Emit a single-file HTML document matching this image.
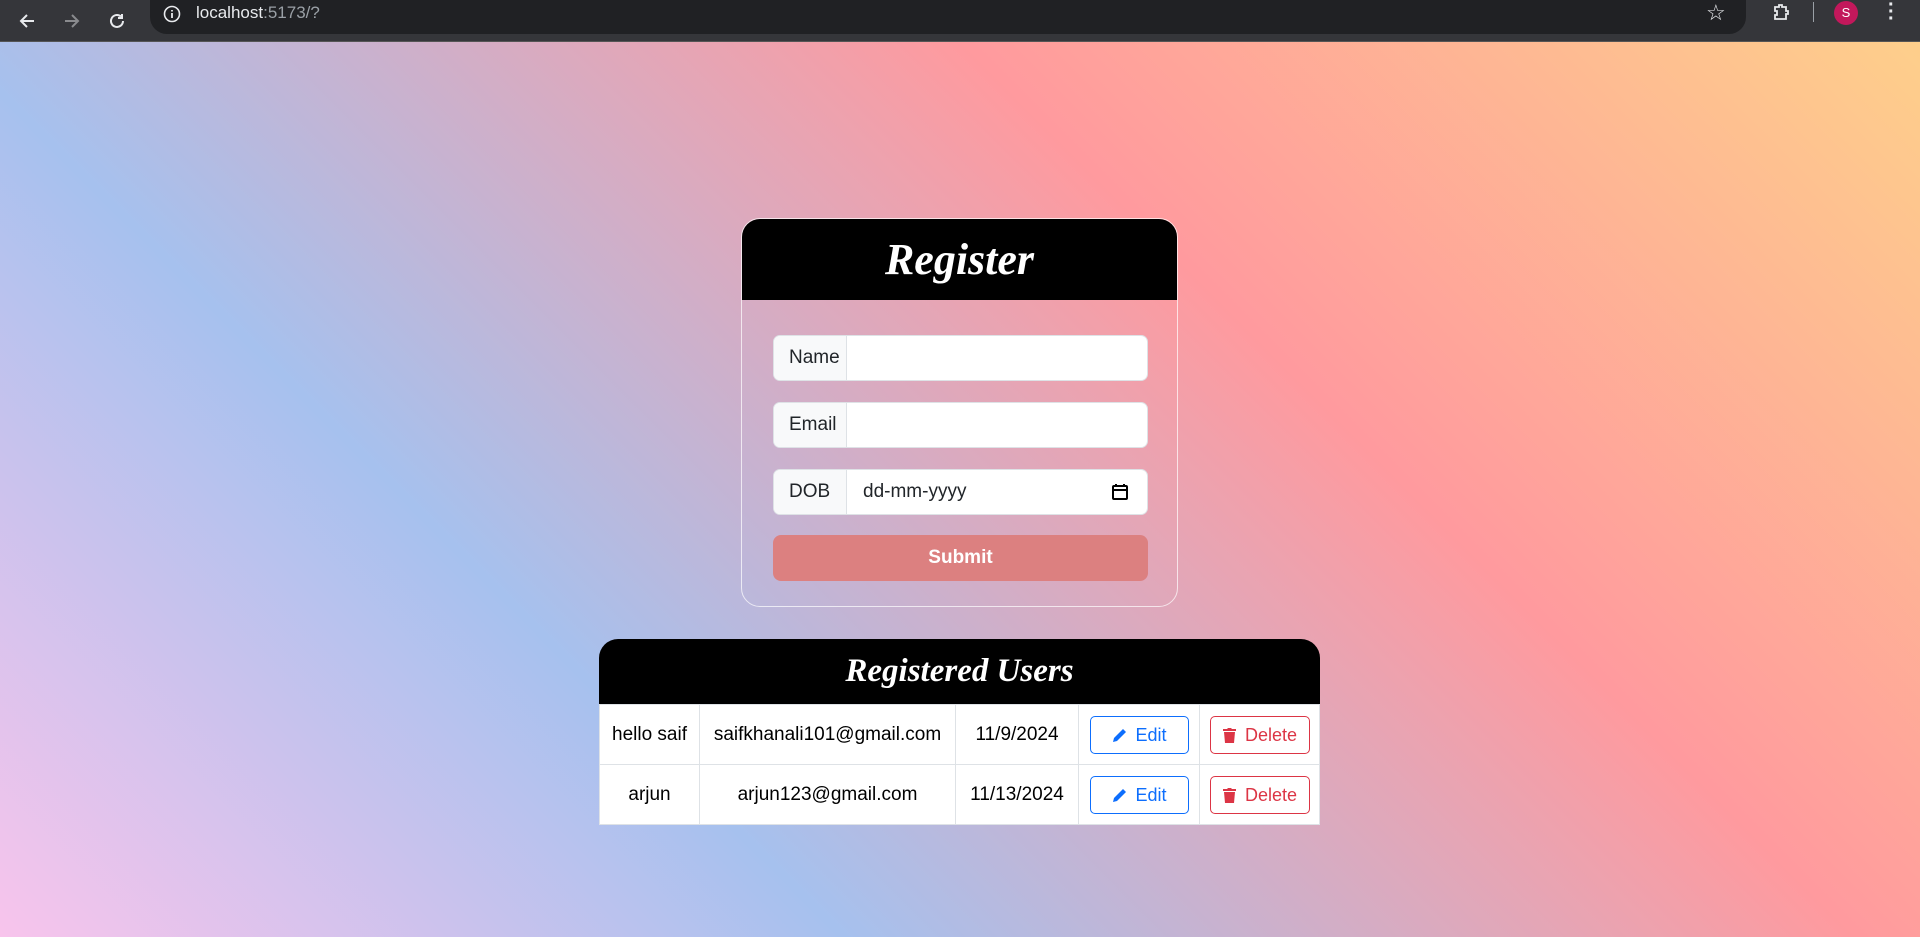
<!DOCTYPE html>
<html><head><meta charset="utf-8"><style>
*{box-sizing:border-box;margin:0;padding:0}
body{width:1920px;height:937px;overflow:hidden;font-family:"Liberation Sans",sans-serif;position:relative}
.bar{position:absolute;left:0;top:0;width:1920px;height:42px;background:#35363a;border-bottom:1px solid #555}
.pill{position:absolute;left:150px;top:0;width:1596px;height:34px;background:#202124;border-radius:0 0 17px 17px}
.bg{position:absolute;left:0;top:42px;width:1920px;height:895px;background:linear-gradient(45deg,#f8c4ec 0%,#a6c1ee 30%,#ff9a9e 66%,#fecf8b 100%)}
.card{position:absolute;left:741px;top:218px;width:437px;height:389px;border:1px solid rgba(255,255,255,.7);border-radius:19px;overflow:hidden}
.card .hd{height:81px;background:#000;color:#fff;text-align:center;font:italic bold 44px/81px "Liberation Serif",serif}
.row{position:absolute;left:31px;width:375px;height:46px;border:1px solid #dee2e6;border-radius:7px;background:#fff;overflow:hidden;font-size:19px;color:#212529}
.row .l{position:absolute;left:0;top:0;width:73px;height:100%;background:#f8f9fa;border-right:1px solid #dee2e6;line-height:44px;padding-left:15px}
.sub{position:absolute;left:31px;top:316px;width:375px;height:46px;border-radius:8px;background:#dc8080;color:#fff;font-weight:bold;font-size:19px;text-align:center;line-height:46px}
.thd{position:absolute;left:599px;top:639px;width:721px;height:65px;background:#000;color:#fff;text-align:center;font:italic bold 33px/65px "Liberation Serif",serif;border-radius:19px 19px 0 0}
table{position:absolute;left:599px;top:704px;width:721px;border-collapse:collapse;font-size:19px;color:#000;table-layout:fixed}
td{background:#fff;border:1px solid #dee2e6;text-align:center;height:60px;padding:0;white-space:nowrap}
.btn{display:inline-block;height:38px;line-height:36px;border-radius:5px;font-size:18px}
.e{border:1px solid #0d6efd;color:#0d6efd;width:99px}
.d{border:1px solid #dc3545;color:#dc3545;width:100px}
.btn svg{vertical-align:-3px;margin-right:8px}
</style></head><body>
<div class="bar"><div class="pill"></div>
<svg style="position:absolute;left:18px;top:12px" width="18" height="18" viewBox="0 0 18 18"><path d="M16 9H3M9 3L3 9l6 6" stroke="#e8eaed" stroke-width="2" fill="none"/></svg>
<svg style="position:absolute;left:63px;top:12px" width="18" height="18" viewBox="0 0 18 18"><path d="M2 9h13M9 3l6 6-6 6" stroke="#8a8b8e" stroke-width="2" fill="none"/></svg>
<svg style="position:absolute;left:108px;top:12px" width="18" height="18" viewBox="0 0 18 18"><path d="M15 9a6 6 0 1 1-2-4.5M14 2v4h-4" stroke="#e8eaed" stroke-width="2" fill="none"/></svg>
<svg style="position:absolute;left:162px;top:4px" width="20" height="20" viewBox="0 0 20 20"><circle cx="10" cy="10" r="7.5" stroke="#e8eaed" stroke-width="1.6" fill="none"/><path d="M10 9v5M10 6v1.5" stroke="#e8eaed" stroke-width="1.8"/></svg>
<div style="position:absolute;left:196px;top:3px;font-size:17px;color:#e8eaed">localhost<span style="color:#9aa0a6">:5173/?</span></div>
<div style="position:absolute;left:1706px;top:0px;font-size:22px;color:#e8eaed">☆</div>
<svg style="position:absolute;left:1771px;top:3px" width="20" height="20" viewBox="0 0 20 20"><path d="M4 4h4V2h3v2h4v4h2v3h-2v5H4v-4h2V8H4z" stroke="#e8eaed" stroke-width="1.8" fill="none"/></svg>
<div style="position:absolute;left:1813px;top:2px;width:1px;height:20px;background:#9aa0a6"></div>
<div style="position:absolute;left:1834px;top:1px;width:24px;height:24px;border-radius:12px;background:#c2185b;color:#fff;font-size:13px;text-align:center;line-height:24px">S</div>
<div style="position:absolute;left:1888px;top:2px;color:#e8eaed;font-size:20px;line-height:7px;font-weight:bold">·<br>·<br>·</div>
</div>
<div class="bg"></div>
<div class="card"><div class="hd">Register</div>
<div class="row" style="top:116px"><div class="l">Name</div></div>
<div class="row" style="top:183px"><div class="l">Email</div></div>
<div class="row" style="top:250px"><div class="l">DOB</div><span style="position:absolute;left:89px;top:0;line-height:44px">dd-mm-yyyy</span>
<svg style="position:absolute;right:18px;top:13px" width="18" height="18" viewBox="0 0 18 18"><rect x="2" y="3" width="14" height="13" rx="1" stroke="#000" stroke-width="2" fill="none"/><path d="M2 7h14M5 1v3M13 1v3" stroke="#000" stroke-width="2"/></svg></div>
<div class="sub">Submit</div>
</div>
<div class="thd">Registered Users</div>
<table>
<colgroup><col style="width:100px"><col style="width:256px"><col style="width:123px"><col style="width:121px"><col></colgroup>
<tr><td>hello saif</td><td>saifkhanali101@gmail.com</td><td>11/9/2024</td><td><span class="btn e"><svg width="16" height="16" viewBox="0 0 16 16"><path d="M12 1l3 3-9 9-4 1 1-4z" fill="#0d6efd"/></svg>Edit</span></td><td><span class="btn d"><svg width="15" height="17" viewBox="0 0 15 17"><path d="M1 2h4l1-1h3l1 1h4v2H1zM2 5h11l-1 11H3z" fill="#dc3545"/></svg>Delete</span></td></tr>
<tr><td>arjun</td><td>arjun123@gmail.com</td><td>11/13/2024</td><td><span class="btn e"><svg width="16" height="16" viewBox="0 0 16 16"><path d="M12 1l3 3-9 9-4 1 1-4z" fill="#0d6efd"/></svg>Edit</span></td><td><span class="btn d"><svg width="15" height="17" viewBox="0 0 15 17"><path d="M1 2h4l1-1h3l1 1h4v2H1zM2 5h11l-1 11H3z" fill="#dc3545"/></svg>Delete</span></td></tr>
</table>
</body></html>
